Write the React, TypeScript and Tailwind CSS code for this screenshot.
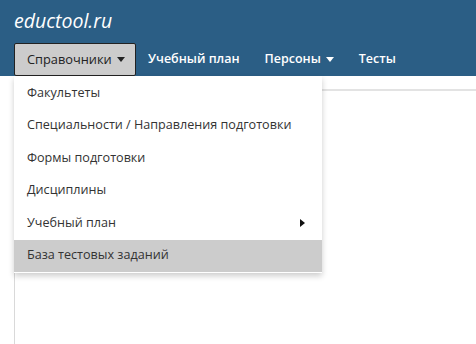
import React from "react";

function Caret({ className }: { className?: string }) {
  return (
    <svg width="8" height="5" viewBox="0 0 8 5" className={className} aria-hidden="true">
      <path d="M0 0h8L4 5z" fill="currentColor" />
    </svg>
  );
}

const MENU = [
  { label: "Факультеты" },
  { label: "Специальности / Направления подготовки" },
  { label: "Формы подготовки" },
  { label: "Дисциплины" },
  { label: "Учебный план", sub: true },
  { label: "База тестовых заданий", active: true },
];

export default function App() {
  return (
    <div
      className="relative h-[344px] w-[476px] overflow-hidden bg-white"
      style={{ fontFamily: '"Open Sans", "Noto Sans", sans-serif' }}
    >
      <header className="h-[76px] bg-[#2b5e85] px-[14px]">
        <div className="pt-[7px] text-[19.5px] italic leading-[28px] text-white">eductool.ru</div>
        <nav className="mt-[8px] flex h-[33px] items-center text-[12.5px] font-semibold text-white">
          <button
            type="button"
            className="flex h-[33px] w-[122px] items-center gap-[5px] rounded-[2px] border border-[#222] bg-[#cccccc] pl-[12px] text-[12.8px] font-normal text-[#222]"
          >
            Справочники
            <Caret />
          </button>
          <span className="ml-[12px]">Учебный план</span>
          <span className="ml-[25px] flex items-center gap-[5px]">
            Персоны
            <Caret />
          </span>
          <span className="ml-[25px]">Тесты</span>
        </nav>
      </header>

      <main className="ml-[14px] h-[268px] border-l border-[#d9d9d9]">
        <div className="h-[13px]" />
        <div className="border-t-2 border-[#e3e3e3]" />
      </main>

      <ul className="absolute left-[14px] top-[76px] w-[308px] bg-white py-[1px] text-[12.6px] text-[#333] shadow-[0_3px_6px_rgba(0,0,0,0.2)]">
        {MENU.map((item) => (
          <li
            key={item.label}
            className={`flex h-[32.5px] items-center justify-between px-[13px] ${
              item.active ? "bg-[#cccccc]" : ""
            }`}
          >
            <span>{item.label}</span>
            {item.sub && (
              <svg width="5" height="8" viewBox="0 0 5 8" className="mr-[4px]" aria-hidden="true">
                <path d="M0 0l5 4-5 4z" fill="#111" />
              </svg>
            )}
          </li>
        ))}
      </ul>
    </div>
  );
}
